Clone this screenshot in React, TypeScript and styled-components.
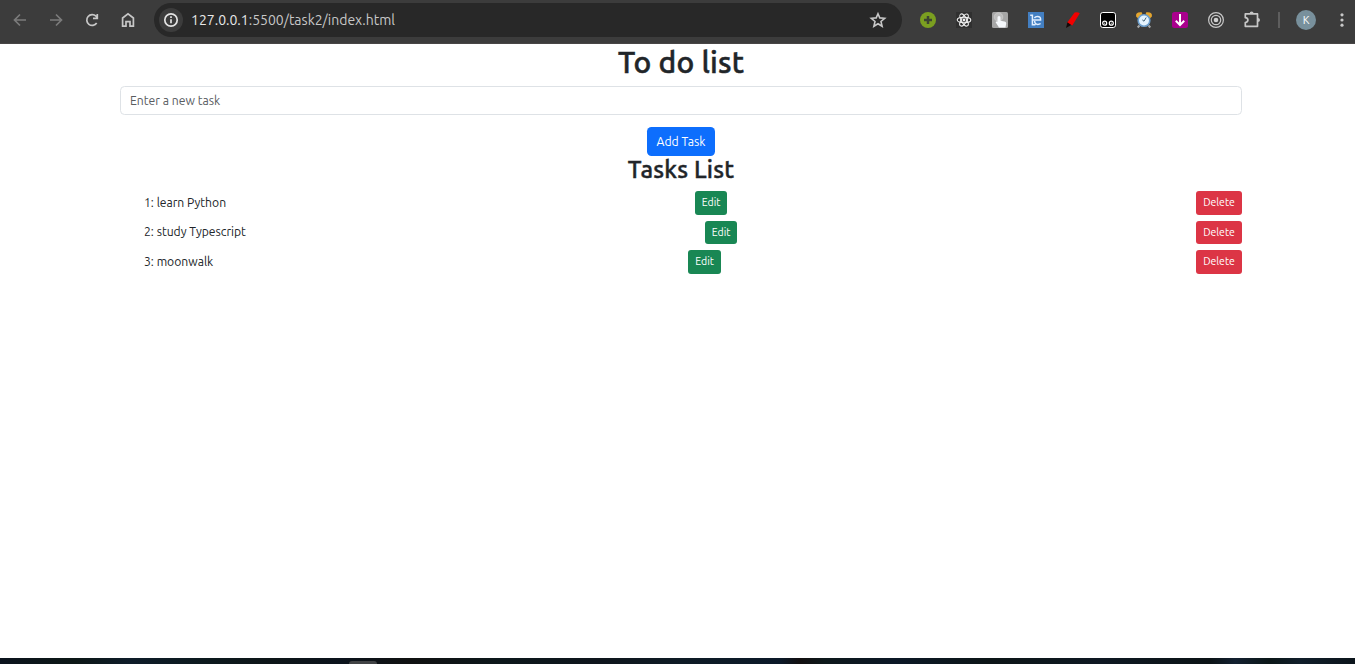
import React from "react";
import styled, { createGlobalStyle } from "styled-components";

const GlobalStyle = createGlobalStyle`
  * { box-sizing: border-box; }
  html, body { margin: 0; background: #fff; overflow: hidden; }
  body { font-family: Ubuntu, "Noto Sans", sans-serif; color: #212529; font-size: 12px; }
  button, input { font-family: inherit; }
`;

const Screen = styled.div`
  display: flex;
  flex-direction: column;
  width: 100%;
  height: 664px;
`;

const Toolbar = styled.header`
  display: flex;
  align-items: center;
  flex: 0 0 44px;
  height: 44px;
  padding: 0 3px 4px 10px;
  background: #3c3c3c;
  border-bottom: 1px solid #484646;
  color: #c7c7c7;
`;

const Navigation = styled.nav`
  display: flex;
  gap: 16px;
  margin-right: 16px;
`;

const Glyph = styled.svg<{ $dim?: boolean }>`
  display: block;
  width: 20px;
  height: 20px;
  flex: none;
  fill: none;
  stroke: ${(p) => (p.$dim ? "#7b7b7b" : "#c7c7c7")};
  stroke-width: 1.7;
`;

const AddressBar = styled.div`
  display: flex;
  align-items: center;
  width: 748px;
  height: 34px;
  padding: 0 14px 0 5px;
  border-radius: 17px;
  background: #282828;
`;

const InfoBadge = styled.span`
  display: flex;
  align-items: center;
  justify-content: center;
  width: 24px;
  height: 24px;
  border-radius: 50%;
  background: #3c3c3c;
`;

const Url = styled.span`
  flex: 1;
  margin-left: 8px;
  font-size: 14px;
  line-height: 20px;
  color: #c7c7c7;
  white-space: nowrap;
`;

const Host = styled.span`
  color: #e8e8e8;
`;

const Extensions = styled.div`
  display: flex;
  align-items: center;
  gap: 16px;
  margin-left: 16px;
`;

const Divider = styled.span`
  width: 2px;
  height: 16px;
  margin-left: 16px;
  background: #5e5e5e;
`;

const Avatar = styled.span`
  display: flex;
  align-items: center;
  justify-content: center;
  width: 20px;
  height: 20px;
  margin: 0 16px;
  border-radius: 50%;
  background: #78909c;
  color: #fff;
  font-size: 11px;
`;

const Page = styled.main`
  display: flex;
  flex-direction: column;
  flex: 1;
  width: 1122px;
  margin-left: 120px;
`;

const Title = styled.h1`
  margin: 0 0 6px;
  height: 36px;
  font-size: 30px;
  line-height: 37px;
  font-weight: 500;
  letter-spacing: 0.15px;
  -webkit-text-stroke: 0.5px currentColor;
  text-align: center;
`;

const TaskInput = styled.input`
  width: 100%;
  height: 29px;
  padding: 0 9px 1px;
  border: 1px solid #dee2e6;
  border-radius: 4.5px;
  font-size: 12.2px;
  &::placeholder { color: #595c5f; opacity: 1; }
`;

const AddButton = styled.button`
  align-self: center;
  width: 68px;
  height: 29px;
  margin-top: 12px;
  padding: 0 0 1px;
  border: 0;
  border-radius: 4.5px;
  background: #0d6efd;
  color: #fff;
  font-size: 12.2px;
`;

const Subtitle = styled.h2`
  margin: 0 0 6px;
  height: 29px;
  font-size: 24px;
  line-height: 27px;
  font-weight: 500;
  letter-spacing: 0.2px;
  -webkit-text-stroke: 0.4px currentColor;
  text-align: center;
`;

const TaskList = styled.ul`
  display: flex;
  flex-direction: column;
  gap: 6px;
  margin: 0;
  padding: 0 0 0 24px;
  list-style: none;
`;

const TaskRow = styled.li`
  display: flex;
  justify-content: space-between;
  height: 23.5px;
  line-height: 24px;

  &:nth-child(even) { line-height: 22px; }
`;

const TaskName = styled.span<{ $width: number }>`
  width: ${(p) => p.$width}px;
  font-size: 12.15px;
  white-space: nowrap;
`;

const SmallButton = styled.button<{ $danger?: boolean }>`
  width: ${(p) => (p.$danger ? 46 : 32.5)}px;
  height: 100%;
  padding: 0 0 1px;
  border: 0;
  border-radius: 3px;
  background: ${(p) => (p.$danger ? "#dc3545" : "#198754")};
  color: #fff;
  font-size: 10.5px;
`;

const Desktop = styled.footer`
  display: flex;
  align-items: flex-end;
  height: 6px;
  padding-left: 349px;
  background: linear-gradient(90deg, #0b131d 0, #0c1716 75px, #0e1c29 130px, #0c191d 210px, #0d1518 270px, #0b131c 340px, #101111 410px, #0c171b 500px, #0e151c 600px, #0e1b25 680px, #0b1929 780px, #120f10 800px, #0d181b 825px, #0b1826 895px, #0c1517 990px, #0e1822 1100px, #0b1316 1210px, #132030 1235px, #0b1718 1270px, #101e2a 1300px, #0b141b 1355px);
`;

const DockHandle = styled.span`
  width: 28px;
  height: 3px;
  border-radius: 10px 10px 0 0;
  background: #414345;
`;

const tasks = [
  { name: "learn Python", width: 82 },
  { name: "study Typescript", width: 102 },
  { name: "moonwalk", width: 69 },
];

function ExtensionIcons() {
  return (
    <Extensions>
      <Glyph viewBox="0 0 20 20">
        <circle cx="10" cy="10" r="8" fill="#7b9f20" stroke="none" />
        <path d="M10 6v8M6 10h8" stroke="#3c4432" strokeWidth="2.5" />
      </Glyph>
      <Glyph viewBox="0 0 20 20">
        <path d="M2 2h16v16H2z" fill="#303030" stroke="none" />
        <g stroke="#f1f1f1" strokeWidth="1.1">
          <ellipse cx="10" cy="10" rx="6.8" ry="2.7" />
          <ellipse cx="10" cy="10" rx="6.8" ry="2.7" transform="rotate(60 10 10)" />
          <ellipse cx="10" cy="10" rx="6.8" ry="2.7" transform="rotate(120 10 10)" />
        </g>
        <circle cx="10" cy="10" r="1.4" fill="#f1f1f1" stroke="none" />
      </Glyph>
      <Glyph viewBox="0 0 20 20">
        <rect x="2" y="2" width="16" height="16" rx="1.5" fill="#a6a6a6" stroke="none" />
        <circle cx="8.5" cy="7" r="4.3" fill="#bdbdbd" stroke="#cbcbcb" strokeWidth=".8" />
        <path d="M7.5 7.5q0-1.5 1.5-1.5t1.5 1.5v3.2l4 .8q1.7.3 1.7 1.7l-.7 4.3H9l-3.4-5.3q.4-1.2 1.9-.4z" fill="#f5f8fb" stroke="none" />
      </Glyph>
      <Glyph viewBox="0 0 20 20">
        <path d="M2 2h16v16H2z" fill="#437fc2" stroke="none" />
        <path d="M4.2 5.2h2.6M6.4 4.6v10.2h3M7 10h7.6q.2-3.6-3.2-3.6-2 0-3 1.6M8.6 11q.2 3.4 3.2 3.4 1.7 0 2.8-.9" stroke="#e2efff" strokeWidth="1.5" />
      </Glyph>
      <Glyph viewBox="0 0 20 20">
        <path d="M12.6 2.5q3.2-.8 5.2.8L10.3 15.4l-5.2-2.6z" fill="#f20000" stroke="none" />
        <path d="M5.4 12.2L9.2 15 4 18z" fill="#160909" stroke="none" />
      </Glyph>
      <Glyph viewBox="0 0 20 20">
        <rect x="2.5" y="2.5" width="15" height="15" rx="2.3" fill="#000" stroke="#fff" strokeWidth="1" />
        <g stroke="#fff" strokeWidth="1.2">
          <circle cx="6.7" cy="13.2" r="2" />
          <circle cx="13.3" cy="13.2" r="2" />
        </g>
        <path d="M6.2 13.2h1M12.8 13.2h1" stroke="#fff" strokeWidth="1" />
      </Glyph>
      <Glyph viewBox="0 0 20 20">
        <path d="M5.5 15.5l-1.8 2M14.5 15.5l1.8 2" stroke="#a7a7a7" strokeWidth="2" />
        <path d="M2.2 6.8Q1 1.6 7.7 2.3L8.4 4 4 8.3zM17.8 6.8Q19 1.6 12.3 2.3L11.6 4 16 8.3z" fill="#e5a62f" stroke="none" />
        <circle cx="10" cy="10.5" r="5.8" fill="#e5f4ff" stroke="#6d9fcd" strokeWidth="1.6" />
        <path d="M12.2 7.5L10 11.2 8.3 9.9" stroke="#456579" strokeWidth="1" />
      </Glyph>
      <Glyph viewBox="0 0 20 20">
        <rect x="2" y="2" width="16" height="16" rx="2.5" fill="#a9008d" stroke="none" />
        <path d="M10 4v11M5.8 10.8l4.2 4.2 4.2-4.2" stroke="#fff" strokeWidth="2" />
      </Glyph>
      <Glyph viewBox="0 0 20 20">
        <g strokeWidth="1.2">
          <circle cx="10" cy="10" r="7.4" />
          <circle cx="10" cy="10" r="4.7" />
        </g>
        <circle cx="10" cy="10" r="2.3" fill="#d0d0d0" stroke="none" />
      </Glyph>
      <Glyph viewBox="0 0 20 20">
        <path d="M3.3 3.9h12.2v12.4H3.3v-3.8q2.6-.2 2.6-2.4T3.3 7.7z" strokeLinejoin="round" />
        <path d="M7.6 3.4q0-2 2-2t2 2zM15.8 8q2.2 0 2.2 2t-2.2 2z" fill="#c7c7c7" stroke="none" />
      </Glyph>
    </Extensions>
  );
}

export default function App() {
  return (
    <Screen>
      <GlobalStyle />
      <Toolbar>
        <Navigation>
          <Glyph viewBox="0 0 20 20" $dim><path d="M16 10H5M10 4.5L4.5 10l5.5 5.5" /></Glyph>
          <Glyph viewBox="0 0 20 20" $dim><path d="M4 10h11M10 4.5l5.5 5.5-5.5 5.5" /></Glyph>
          <Glyph viewBox="0 0 20 20"><path d="M14.7 13A5.4 5.4 0 1 1 14 6.2l1.2 1.3M15.3 4v4.3H11" /></Glyph>
          <Glyph viewBox="0 0 20 20"><path d="M4.6 8L10 3.8 15.4 8v8.2H12v-4.5H8v4.5H4.6z" /></Glyph>
        </Navigation>
        <AddressBar>
          <InfoBadge>
            <Glyph viewBox="0 0 20 20">
              <g stroke="#e3e3e3">
                <circle cx="10" cy="10" r="6.2" />
                <path d="M10 9.2v4M10 6.3V8" />
              </g>
            </Glyph>
          </InfoBadge>
          <Url><Host>127.0.0.1</Host>:5500/task2/index.html</Url>
          <Glyph viewBox="0 0 20 20"><path d="M10 3.8l1.8 4.1 4.9.4-3.7 3.2 1.1 4.7-4.1-2.5-4.1 2.5L7 11.5 3.3 8.3l4.9-.4z" strokeWidth="1.6" /></Glyph>
        </AddressBar>
        <ExtensionIcons />
        <Divider />
        <Avatar>K</Avatar>
        <Glyph viewBox="0 0 20 20">
          <g fill="#c7c7c7" stroke="none">
            <circle cx="10" cy="4.8" r="1.6" />
            <circle cx="10" cy="10" r="1.6" />
            <circle cx="10" cy="15.2" r="1.6" />
          </g>
        </Glyph>
      </Toolbar>
      <Page>
        <Title>To do list</Title>
        <TaskInput placeholder="Enter a new task" />
        <AddButton>Add Task</AddButton>
        <Subtitle>Tasks List</Subtitle>
        <TaskList>
          {tasks.map((task, i) => (
            <TaskRow key={task.name}>
              <TaskName $width={task.width}>{i + 1}: {task.name}</TaskName>
              <SmallButton>Edit</SmallButton>
              <SmallButton $danger>Delete</SmallButton>
            </TaskRow>
          ))}
        </TaskList>
      </Page>
      <Desktop><DockHandle /></Desktop>
    </Screen>
  );
}
